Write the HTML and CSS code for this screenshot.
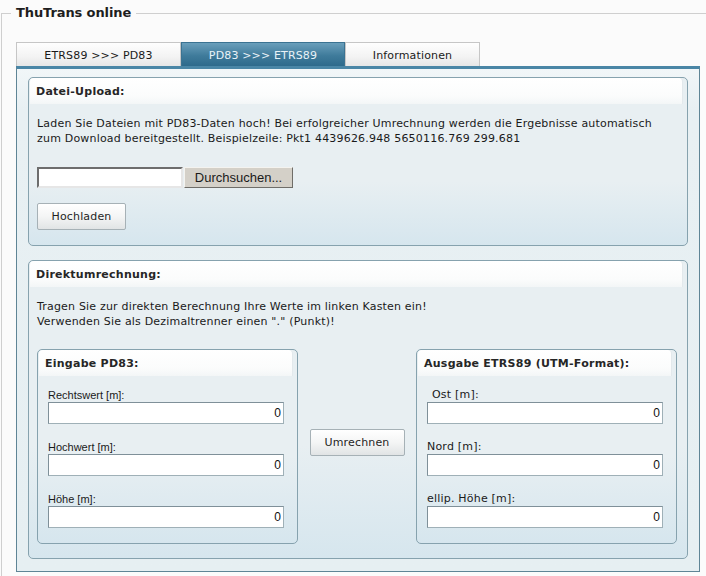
FILE: index.html
```html
<!DOCTYPE html>
<html lang="de">
<head>
<meta charset="utf-8">
<title>ThuTrans online</title>
<link rel="stylesheet" href="styles.css">
</head>
<body>
<fieldset class="frame">
  <legend class="frame-title">ThuTrans online</legend>
  <div class="app">
    <ul class="tabs">
      <li class="tab tab-1">ETRS89 &gt;&gt;&gt; PD83</li>
      <li class="tab tab-2 tab-active">PD83 &gt;&gt;&gt; ETRS89</li>
      <li class="tab tab-3">Informationen</li>
    </ul>
    <div class="panel">
      <section class="box box-upload">
        <h2 class="box-head">Datei-Upload:</h2>
        <div class="box-body">
          <p class="intro">Laden Sie Dateien mit PD83-Daten hoch! Bei erfolgreicher Umrechnung werden die Ergebnisse automatisch<br>zum Download bereitgestellt. Beispielzeile: Pkt1 4439626.948 5650116.769 299.681</p>
          <div class="file-row">
            <input class="file-field" type="text" aria-label="Datei">
            <button class="file-btn" type="button">Durchsuchen...</button>
          </div>
          <button class="btn btn-upload" type="button">Hochladen</button>
        </div>
      </section>
      <section class="box box-direct">
        <h2 class="box-head">Direktumrechnung:</h2>
        <div class="box-body">
          <p class="intro">Tragen Sie zur direkten Berechnung Ihre Werte im linken Kasten ein!<br>Verwenden Sie als Dezimaltrenner einen "." (Punkt)!</p>
          <div class="convert-row">
            <section class="sub">
              <h3 class="sub-head">Eingabe PD83:</h3>
              <div class="sub-body">
                <label class="field field-in"><span class="lbl">Rechtswert [m]:</span><input class="num" type="text" value="0"></label>
                <label class="field field-in"><span class="lbl">Hochwert [m]:</span><input class="num" type="text" value="0"></label>
                <label class="field field-in"><span class="lbl">Höhe [m]:</span><input class="num" type="text" value="0"></label>
              </div>
            </section>
            <button class="btn btn-convert" type="button">Umrechnen</button>
            <section class="sub">
              <h3 class="sub-head">Ausgabe ETRS89 (UTM-Format):</h3>
              <div class="sub-body">
                <label class="field field-out"><span class="lbl lbl-indent">Ost [m]:</span><input class="num" type="text" value="0"></label>
                <label class="field field-out"><span class="lbl">Nord [m]:</span><input class="num" type="text" value="0"></label>
                <label class="field field-out"><span class="lbl">ellip. Höhe [m]:</span><input class="num" type="text" value="0"></label>
              </div>
            </section>
          </div>
        </div>
      </section>
    </div>
  </div>
</fieldset>
</body>
</html>
```

FILE: styles.css
```css
html, body {
  margin: 0;
  padding: 0;
  background: #fbfbfb;
  overflow: hidden;
}

body {
  font-family: "DejaVu Sans", Verdana, sans-serif;
  font-size: 11px;
  color: #1a1a1a;
}

.frame {
  box-sizing: border-box;
  width: 740px;
  min-width: 0;
  margin: 5px 0 0 1px;
  padding: 21px 0 20px 14px;
  border: 1px solid #cfcfcf;
}

.frame-title {
  margin-left: -5px;
  padding: 0 5px;
  font: bold 13px/16px "DejaVu Sans", Verdana, sans-serif;
  color: #1e1e1e;
  letter-spacing: -0.1px;
}

.app {
  width: 684px;
}

/* Tabs */
.tabs {
  display: flex;
  margin: 0;
  padding: 0;
  list-style: none;
  height: 24px;
}

.tab {
  box-sizing: border-box;
  height: 24px;
  display: flex;
  align-items: center;
  justify-content: center;
  border: 1px solid #c6c6c6;
  border-bottom: 0;
  background: linear-gradient(#fefefe, #f3f3f3 60%, #e6e6e6);
  color: #1a1a1a;
  padding-top: 1px;
  letter-spacing: 0.15px;
}

.tab-1 { width: 165px; }
.tab-2 { width: 164px; }
.tab-3 { width: 135px; }

.tab-active {
  background: linear-gradient(#6a9fbb, #3f7b9b 55%, #2e6a8b);
  border-color: #3b7392;
  color: #e9f2f7;
}

/* Panel */
.panel {
  display: flex;
  flex-direction: column;
  gap: 14px;
  border: 1px solid #5f8596;
  border-top: 3px solid #4a86a6;
  background: linear-gradient(#f1f6f8, #e8f0f3 40px, #e6eff2);
  padding: 8px 11px 12px 11px;
}

/* Section boxes */
.box {
  border: 1px solid #86a2ae;
  border-radius: 5px;
  background: linear-gradient(#e8eff2 0%, #e8eff2 62%, #d6e6ee 100%);
  overflow: hidden;
}

.box-head,
.sub-head {
  margin: 0 4px 0 1px;
  height: 26px;
  padding-left: 6px;
  background: linear-gradient(#ffffff, #fbfcfc 70%, #f3f6f7);
  border-right: 1px solid #e3e9ec;
  font: bold 11px/27px "DejaVu Sans", Verdana, sans-serif;
  letter-spacing: 0.25px;
  color: #262626;
  border-top-left-radius: 4px;
  border-top-right-radius: 4px;
}

.box-body {
  padding: 12px 10px 15px 8px;
}

.box-direct .box-body {
  padding-bottom: 14px;
}

.intro {
  margin: 0;
  line-height: 15px;
  letter-spacing: 0.19px;
  color: #1a1a1a;
}

/* File upload */
.file-row {
  display: flex;
  gap: 1px;
  margin-top: 21px;
  height: 21px;
}

.file-field {
  box-sizing: border-box;
  width: 146px;
  height: 21px;
  margin: 0;
  border: 2px solid;
  border-color: #6d6d6d #e6e6e6 #e6e6e6 #6d6d6d;
  background: #fff;
  padding: 0 2px;
}

.file-btn {
  box-sizing: border-box;
  width: 109px;
  height: 21px;
  margin: 0;
  padding: 0;
  border: 1px solid;
  border-color: #f4f3ef #6f6d68 #6f6d68 #f4f3ef;
  background: #d4d0c8;
  font: 13px "Liberation Sans", Arial, sans-serif;
  color: #1a1a1a;
}

.btn {
  box-sizing: border-box;
  height: 27px;
  margin: 0;
  padding: 0;
  border: 1px solid #a6b1b6;
  border-radius: 2px;
  background: linear-gradient(#ffffff, #f4f5f5 50%, #e1e4e5);
  font: 11px "DejaVu Sans", Verdana, sans-serif;
  letter-spacing: 0.15px;
  color: #1f1f1f;
}

.btn-upload {
  display: block;
  width: 89px;
  margin-top: 15px;
}

/* Direct conversion */
.convert-row {
  display: flex;
  justify-content: space-between;
  align-items: center;
  margin-top: 20px;
}

.btn-convert {
  width: 95px;
  margin-bottom: 8px;
}

.sub {
  box-sizing: border-box;
  width: 261px;
  height: 195px;
  border: 1px solid #86a2ae;
  border-radius: 5px;
  background: linear-gradient(#e8eff2 0%, #e8eff2 55%, #d6e6ee 100%);
  overflow: hidden;
}

.sub-body {
  padding: 12px 13px 0 10px;
}

.field {
  display: block;
}

.field + .field {
  margin-top: 16px;
}

.lbl {
  display: block;
  height: 14px;
  line-height: 14px;
  color: #1a1a1a;
}

.field-in .lbl {
  font: 11px/14px "Liberation Sans", Arial, sans-serif;
}

.field-out .lbl {
  font: 11px/14px "DejaVu Sans", Verdana, sans-serif;
  letter-spacing: 0.2px;
}

.lbl-indent {
  padding-left: 5px;
}

.num {
  box-sizing: border-box;
  display: block;
  width: 100%;
  height: 22px;
  margin: 0;
  padding: 0 2px 0 0;
  border: 1px solid;
  border-color: #7f9099 #9fb0b7 #9fb0b7 #7f9099;
  background: #ffffff;
  text-align: right;
  font: 12px "Liberation Sans", Arial, sans-serif;
  color: #111;
}
```
